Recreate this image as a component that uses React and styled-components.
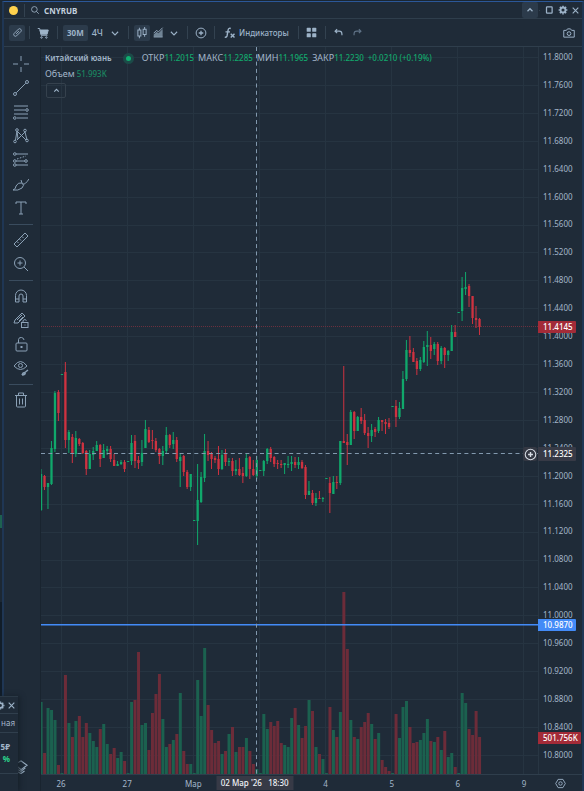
import React, { PureComponent } from 'react';
import styled, { createGlobalStyle } from 'styled-components';

const GlobalStyle = createGlobalStyle`
  * {
    box-sizing: border-box;
  }
  body {
    margin: 0;
    background: #1a2632;
    color: #a3b6c9;
    font: 8px/12px 'Noto Sans', sans-serif;
  }
  button, input {
    font: inherit;
    color: inherit;
  }
`;

const Page = styled.div`
  display: flex;
  min-height: 100vh;
  position: relative;
  overflow: hidden;
`;

const Behind = styled.div`
  display: flex;
  flex-direction: column;
  width: 2px;
  background: #1b2733;
`;

const BehindBlock = styled.div`
  flex: ${(props) => props.$size};
  background: ${(props) => props.$color};
`;

const Root = styled.main`
  flex: 1;
  min-width: 0;
  display: flex;
  flex-direction: column;
  margin-top: 1px;
  background: #1f2b38;
  border: 1px solid #2b5798;
  border-left: 2px solid #1f3654;
  border-right: 2px solid #1f3654;
  border-bottom: none;
`;

const TitleBar = styled.header`
  display: flex;
  align-items: center;
  height: 17px;
  padding: 0 1px 0 5px;
  border-bottom: 1px solid #2f3e4c;
`;

const Dot = styled.span`
  width: 9px;
  height: 9px;
  border-radius: 50%;
  background: #ffd24d;
`;

const Separator = styled.span`
  width: 1px;
  height: ${(props) => props.$height || 13}px;
  margin: 0 ${(props) => props.$right || 5}px 0 ${(props) => props.$left || 5}px;
  background: #334250;
`;

const Ticker = styled.input`
  width: 120px;
  height: 14px;
  margin-left: 4px;
  padding: 0;
  border: none;
  outline: none;
  background: none;
  color: #c3d0de;
  font-weight: 700;
`;

const Spacer = styled.span`
  flex: 1;
`;

const IconButton = styled.button`
  display: flex;
  align-items: center;
  justify-content: center;
  flex: none;
  width: ${(props) => props.$width || 16}px;
  height: ${(props) => props.$height || 16}px;
  padding: 0;
  border: none;
  border-radius: 2px;
  background: ${(props) => (props.$active ? '#2c3b4b' : 'none')};
  color: ${(props) => (props.$dim ? '#5f7286' : '#9db3c8')};
`;

const TextButton = styled(IconButton)`
  width: auto;
  padding: 0 4px;
  gap: 3px;
  font-size: ${(props) => props.$font || 8}px;
  font-weight: ${(props) => (props.$active ? 700 : 500)};
`;

const RailButton = styled(IconButton)`
  width: 24px;
  height: 24px;
  color: #8ba1b6;
`;

const Toolbar = styled.div`
  display: flex;
  align-items: center;
  height: 28px;
  padding: 0 5px;
  border-bottom: 1px solid #2f3e4c;
`;

const Body = styled.div`
  flex: 1;
  display: flex;
`;

const Rail = styled.nav`
  display: flex;
  flex-direction: column;
  align-items: center;
  width: 37px;
  padding: 5px 2px 16px 0;
  border-right: 1px solid #19242f;
`;

const RailLine = styled.hr`
  width: 24px;
  height: 1px;
  margin: 4px 0 3px;
  border: none;
  background: #3a4c5e;
`;

const Main = styled.section`
  flex: 1;
  min-width: 0;
  display: flex;
  flex-direction: column;
`;

const PlotRow = styled.div`
  flex: 1;
  display: flex;
`;

const Plot = styled.div`
  flex: 1;
  min-width: 0;
  position: relative;
`;

const Canvas = styled.svg`
  position: absolute;
  width: 100%;
  height: 100%;
`;

const Legend = styled.div`
  position: relative;
  padding: 3px 4px;
  font-size: 9px;
`;

const LegendRow = styled.div`
  display: flex;
  align-items: center;
  height: 16px;
  gap: ${(props) => props.$gap || 4}px;
  white-space: nowrap;
`;

const Name = styled.span`
  font-size: 8px;
  font-weight: 600;
  margin-right: 7px;
`;

const Status = styled.span`
  width: 11px;
  height: 11px;
  margin-right: 4px;
  border: 3px solid #1c4a48;
  border-radius: 50%;
  background: #10b070;
`;

const Value = styled.span`
  font-size: 8px;
  font-weight: 500;
  color: ${(props) => (props.$dim ? '#1b8560' : '#12a86c')};
`;

const Collapse = styled(IconButton)`
  margin-top: 1px;
  margin-left: 1px;
  border: 1px solid #35414d;
`;

const PriceAxis = styled.aside`
  position: relative;
  display: flex;
  flex-direction: column;
  justify-content: space-between;
  width: 44px;
  padding: 4px 0 13px 4px;
  border-left: 1px solid #283643;
`;

const PriceTag = styled.span`
  position: absolute;
  left: -1px;
  top: ${(props) => props.$top}%;
  transform: translateY(-50%);
  height: ${(props) => props.$height || 12}px;
  padding: 0 3px 0 5px;
  line-height: ${(props) => props.$height || 12}px;
  font-weight: 500;
  border-radius: 0 1px 1px 0;
  background: ${(props) => props.$color};
  color: #ffffff;
`;

const AddButton = styled(IconButton)`
  position: absolute;
  right: 1px;
  top: ${(props) => props.$top}%;
  transform: translateY(-50%);
  background: #343843;
  color: #d5dbe3;
`;

const TimeRow = styled.div`
  display: flex;
  height: 17px;
  border-top: 1px solid #2f3e4c;
`;

const TimeAxis = styled.div`
  flex: 1;
  position: relative;
`;

const Days = styled.div`
  display: grid;
  grid-template-columns: repeat(8, 1fr);
  margin: 0 -19px 0 -13px;
  line-height: 17px;
  text-align: center;
`;

const TimeTag = styled.span`
  position: absolute;
  top: 1px;
  left: 43%;
  width: 77px;
  transform: translateX(-50%);
  line-height: 14px;
  text-align: center;
  white-space: pre;
  font-weight: 500;
  background: #373a46;
  color: #f0f3f7;
`;

const TimeSettings = styled.div`
  display: flex;
  justify-content: center;
  width: 44px;
`;

const Popup = styled.aside`
  position: absolute;
  left: 0;
  bottom: 0;
  display: flex;
  flex-direction: column;
  width: 18px;
  height: 95px;
  border-top: 1px solid #2b3946;
  background: #1f2b38;
  box-shadow: 2px 0 5px #17212b;
`;

const PopupRow = styled.div`
  display: flex;
  flex-direction: column;
  align-items: flex-end;
  justify-content: center;
  height: ${(props) => props.$height}px;
  padding-right: ${(props) => props.$right || 2}px;
  border-bottom: 1px solid #303f4d;
  overflow: hidden;
`;

const PopupHeader = styled(PopupRow)`
  flex-direction: row;
  align-items: center;
  justify-content: flex-end;
`;

const Percent = styled.strong`
  color: #2bd48b;
`;

// [up, high, body top, body bottom, low, volume top]
const BARS = [
  [1, 469, 474, 510, 511, 702], [0, 475, 476, 487, 490, 753], [1, 483, 483, 487, 509, 708], [1, 441, 448, 484, 485, 710],
  [1, 391, 393, 449, 452, 720], [0, 390, 392, 413, 421, 765], [1, 374, 374, 375, 375, 773], [0, 362, 372, 440, 448, 675],
  [1, 430, 432, 440, 453, 723], [0, 434, 437, 454, 463, 737], [1, 431, 438, 454, 457, 721], [0, 438, 439, 444, 446, 716],
  [0, 442, 443, 453, 454, 737], [0, 450, 451, 469, 475, 723], [1, 450, 454, 469, 469, 733], [1, 447, 451, 455, 460, 741],
  [1, 441, 445, 451, 451, 747], [0, 444, 445, 459, 467, 729], [1, 444, 450, 458, 458, 724], [1, 446, 449, 451, 455, 744],
  [0, 446, 449, 459, 462, 754], [0, 454, 460, 466, 466, 748], [1, 461, 464, 466, 466, 758], [1, 460, 462, 464, 465, 752],
  [0, 460, 462, 469, 472, 761], [1, 461, 461, 462, 462, 773], [1, 435, 443, 461, 465, 702], [0, 435, 441, 461, 468, 700],
  [0, 456, 460, 463, 469, 652], [1, 440, 453, 462, 466, 725], [1, 420, 429, 448, 448, 723], [0, 427, 430, 442, 443, 750],
  [0, 430, 440, 441, 449, 713], [0, 438, 441, 450, 452, 694], [0, 448, 449, 456, 464, 674], [1, 446, 451, 456, 465, 719],
  [1, 427, 435, 451, 454, 747], [0, 434, 435, 445, 448, 744], [1, 432, 440, 444, 449, 740], [0, 437, 440, 459, 462, 734],
  [1, 453, 457, 461, 487, 693], [0, 455, 456, 472, 476, 751], [0, 470, 472, 487, 489, 764], [1, 474, 474, 487, 491, 764],
  [1, 520, 520, 521, 521, 773], [1, 464, 500, 521, 545, 680], [1, 472, 477, 502, 503, 716], [1, 434, 451, 478, 482, 648],
  [0, 441, 451, 455, 461, 705], [0, 452, 454, 459, 469, 730], [0, 456, 458, 460, 463, 743], [0, 446, 459, 469, 475, 741],
  [1, 450, 455, 469, 470, 754], [0, 449, 454, 462, 466, 751], [1, 458, 461, 462, 466, 734], [0, 458, 461, 471, 476, 727],
  [1, 460, 469, 471, 475, 752], [0, 458, 469, 475, 476, 747], [0, 467, 473, 476, 483, 747], [1, 453, 458, 476, 477, 738],
  [0, 456, 457, 469, 479, 751], [0, 460, 469, 475, 476, 764], [1, 456, 460, 476, 479, 769], [1, 470, 470, 471, 471, 773],
  [1, 460, 461, 471, 476, 714], [1, 448, 449, 461, 464, 729], [0, 447, 449, 458, 462, 722], [0, 456, 457, 464, 467, 726],
  [0, 460, 463, 464, 469, 721], [0, 460, 464, 465, 468, 743], [1, 463, 463, 465, 474, 745], [1, 456, 464, 465, 468, 747],
  [1, 456, 462, 464, 471, 718], [0, 457, 462, 465, 468, 708], [1, 457, 462, 465, 469, 725], [0, 460, 462, 468, 469, 738],
  [0, 465, 467, 495, 499, 726], [1, 481, 491, 495, 495, 700], [0, 490, 493, 503, 505, 711], [1, 493, 498, 503, 506, 747],
  [0, 491, 498, 499, 499, 754], [1, 497, 498, 499, 502, 759], [1, 478, 478, 479, 479, 773], [0, 477, 483, 493, 513, 707],
  [1, 476, 482, 494, 494, 730], [0, 476, 482, 483, 489, 737], [1, 441, 441, 483, 485, 712], [0, 366, 441, 443, 443, 592],
  [0, 434, 442, 445, 465, 649], [1, 410, 412, 445, 445, 720], [0, 411, 412, 431, 439, 737], [1, 416, 417, 431, 431, 739],
  [0, 408, 417, 421, 424, 727], [0, 414, 420, 433, 435, 722], [0, 427, 433, 436, 448, 713], [1, 424, 430, 436, 442, 724],
  [0, 427, 429, 432, 437, 739], [1, 417, 420, 431, 433, 733], [0, 420, 420, 422, 431, 760], [0, 419, 422, 424, 434, 767],
  [0, 418, 423, 427, 429, 771], [1, 406, 406, 407, 407, 773], [0, 400, 406, 417, 427, 714], [1, 402, 408, 417, 419, 738],
  [1, 371, 379, 409, 409, 707], [1, 340, 350, 379, 381, 701], [0, 336, 350, 353, 357, 727], [0, 348, 352, 362, 362, 743],
  [0, 358, 361, 369, 375, 742], [1, 357, 360, 369, 371, 740], [1, 341, 347, 362, 363, 733], [1, 331, 345, 347, 366, 719],
  [0, 337, 345, 351, 359, 741], [1, 342, 344, 349, 355, 742], [0, 342, 344, 361, 365, 737], [1, 346, 348, 361, 364, 750],
  [0, 347, 348, 355, 368, 731], [1, 350, 351, 355, 361, 757], [1, 325, 332, 351, 351, 753], [0, 325, 332, 337, 337, 767],
  [1, 312, 312, 313, 313, 773], [1, 277, 288, 311, 321, 693], [1, 272, 287, 289, 295, 703], [0, 284, 286, 296, 307, 729],
  [0, 296, 296, 318, 324, 735], [0, 306, 318, 320, 328, 711], [0, 318, 319, 327, 335, 737],
];

const PLOT = { left: 41, top: 47, width: 497, height: 727 };
const PRICES = Array.from({ length: 26 }, (_, i) => (11.8 - i * 0.04).toFixed(4));
const DAYS = ['26', '27', 'Мар', '', '4', '5', '6', '9'];

const topOf = (y) => ((y - PLOT.top) / PLOT.height) * 100;
const barX = (i) => 40.8 + i * 3.48;

const ICONS = {
  search: <><circle cx="7" cy="7" r="4.5" /><path d="M10.5 10.5 14 14" /></>,
  up: <path d="m4 10 4-4 4 4" strokeWidth="2" />,
  down: <path d="m3 6 5 5 5-5" strokeWidth="1.700" />,
  square: <rect x="4" y="3" width="9" height="10" rx="1" strokeWidth="2" />,
  gear: <><circle cx="8" cy="8" r="4" strokeWidth="3" /><path d="M8 1v2M8 13v2M1 8h2M13 8h2M3 3l2 2M11 11l2 2M3 13l2-2M11 5l2-2" strokeWidth="2.4" /></>,
  close: <path d="m3 3 10 10M13 3 3 13" strokeWidth="2" />,
  pencil: <path d="M3 9.500 9.500 3a2.500 2.500 0 0 1 3.500 3.500L6.500 13a2.500 2.500 0 0 1-3.500-3.500zM6 10l4-4" />,
  cart: <><path d="M1 2h2.500l2 9H14" /><path d="M4 4h11l-1.500 5.500H5.500z" fill="currentColor" /><circle cx="6" cy="14" r="1" /><circle cx="12.500" cy="14" r="1" /></>,
  candles: <><path d="M4.500 1v3M4.500 12v3M11.500 0v3M11.500 10v3" /><rect x="2.500" y="4" width="4" height="8" /><rect x="9.500" y="3" width="4" height="7" /></>,
  area: <><path d="M1 14V11l4-4 3 2 6-6v11z" fill="currentColor" stroke="none" opacity=".65" /><path d="m1 9 4-4 3 2 6-6M1 14.500h13" /></>,
  plusCircle: <><circle cx="8" cy="8" r="6.500" /><path d="M8 5v6M5 8h6" strokeWidth="1.700" /></>,
  fx: <><path d="M9 2q-3-1-3.500 2L4 12q-.5 2-3 1.500M2 6.500h6" strokeWidth="1.900" /><path d="m9 9 5 5M14 9l-5 5" strokeWidth="1.900" /></>,
  tiles: <g fill="currentColor" stroke="none"><rect x="1" y="1" width="6" height="6" rx="1" /><rect x="9" y="1" width="6" height="6" rx="1" /><rect x="1" y="9" width="6" height="6" rx="1" /><rect x="9" y="9" width="6" height="6" rx="1" /></g>,
  undo: <path d="M6 3 3 6l3 3M3 6h6q4 0 4 4v2" strokeWidth="1.700" />,
  redo: <path d="m10 3 3 3-3 3M13 6H7q-4 0-4 4v2" strokeWidth="1.700" />,
  camera: <><path d="M1 4.500h3.500L6 2.500h4l1.500 2H15v9H1z" /><circle cx="8" cy="8.800" r="2.500" /></>,
  cross: <path d="M8 0v5M8 11v5M0 8h5M11 8h5" />,
  line: <><path d="M3.200 12.800 12.800 3.200" /><circle cx="2" cy="14" r="1.500" /><circle cx="14" cy="2" r="1.500" /></>,
  fib: <><path d="M1 2h14M1 6h11M1 10h14M4 14h11" /><circle cx="14" cy="6" r="1.300" /><circle cx="1.800" cy="14" r="1.300" /></>,
  pattern: <><path d="M2.500 12 4 3l9 9M4 12l8-8 2 8M4 3l1 8" /><circle cx="4" cy="2" r="1.300" /><circle cx="12" cy="2.500" r="1.300" /><circle cx="2" cy="13.500" r="1.300" /><circle cx="14" cy="12.500" r="1.300" /></>,
  forecast: <><path d="M3 2h12M3 9h9M3 13h12" /><path d="m4 7 9-3" strokeDasharray="1.500 1.500" /><circle cx="1.800" cy="2" r="1.300" /><circle cx="1.800" cy="9" r="1.300" /><circle cx="1.800" cy="13" r="1.300" /><circle cx="13" cy="9" r="1.300" /></>,
  brush: <path d="M0 14q3-1 3-4 2-4 6-3 3 2 0 5-4 3-9 2M9 7l-1-3M10 8q2 1 6-5" />,
  text: <path d="M3 4V2h10v2M8 2v12M6 14h4" />,
  ruler: <path d="M1 12 12 1l3 3L4 15zM4 9.500 5.500 11M6.500 7 8 8.500M9 4.500 10.500 6" />,
  zoom: <><circle cx="7" cy="7" r="5.500" /><path d="m11 11 4 4M7 4.500v5M4.500 7h5" /></>,
  magnet: <path d="M2.500 14V7.500a5.500 5.500 0 0 1 11 0V14H10V8a2 2 0 0 0-4 0v6zM2.500 11H6M10 11h3.500" />,
  lockPencil: <><path d="m1 11 1-3 7-7 3 3-7 7zM4 8l5-5M6 9l4-4" /><rect x="8.500" y="10.500" width="6.500" height="5" /><path d="M10 10V8.500q2-2 3.500 0M12 12.500v1" /></>,
  lock: <><rect x="3" y="7" width="11" height="8" rx="1" /><path d="M5.500 7V3.500Q6 1 8.500 1.500 11 2 11 4" /><path d="M8.500 10v2" strokeWidth="2" /></>,
  eye: <><path d="M1 6q6.500-9 13 0Q7.500 13 1 6z" /><circle cx="7.500" cy="5.500" r="2" /><path d="M9 15q1-3 3-2.500 1 2-3 2.500M12.500 12l2.500-2" strokeWidth="1.500" /></>,
  trash: <path d="M2 3.500h12M5.500 3V1h5v2M3.500 4v10q0 1 1 1h7q1 0 1-1V4M6.500 6.500v6M9.500 6.500v6" />,
  layers: <path d="m1 5 7-4 7 5-7 5zM1 9l7 4 5-4M1 12l7 3.500 4-3M4 7.500 8 11" />,
  hexagon: <><path d="M4.500 2h7L15 8l-3.500 6h-7L1 8z" /><circle cx="8" cy="8" r="2.500" /></>,
};

function Icon({ name, size = 12, stroke = 1.3 }) {
  return (
    <svg width={size} height={size} viewBox="0 0 16 16" fill="none" stroke="currentColor" strokeWidth={stroke} aria-hidden="true">
      {ICONS[name]}
    </svg>
  );
}

const RAIL = [
  [['cross', 'Перекрестие'], ['line', 'Линия'], ['fib', 'Фибоначчи'], ['pattern', 'Паттерны'], ['forecast', 'Прогноз'], ['brush', 'Кисть'], ['text', 'Текст']],
  [['ruler', 'Линейка'], ['zoom', 'Увеличить']],
  [['magnet', 'Магнит'], ['lockPencil', 'Режим рисования'], ['lock', 'Закрепить'], ['eye', 'Скрыть']],
  [['trash', 'Удалить']],
];

class Chart extends PureComponent {
  render() {
    const bottom = PLOT.top + PLOT.height;
    const right = PLOT.left + PLOT.width;
    return (
      <Canvas viewBox={`${PLOT.left} ${PLOT.top} ${PLOT.width} ${PLOT.height}`} preserveAspectRatio="none">
        <g stroke="#263441">
          {PRICES.map((price, i) => {
            const y = Math.round(57 + i * 27.92) + 0.5;
            return <line key={price} x1={PLOT.left} x2={right} y1={y} y2={y} />;
          })}
          {DAYS.map((day, i) => (
            <line key={i} x1={61.5 + i * 66} x2={61.5 + i * 66} y1={PLOT.top} y2={bottom} />
          ))}
        </g>
        {BARS.map(([up, , , , , volume], i) => (
          <rect key={i} x={barX(i) - 1.2} y={volume} width="3" height={bottom - volume} fill={up ? '#1b614f' : '#6c2c39'} />
        ))}
        <line x1={PLOT.left} x2={right} y1="624.7" y2="624.7" stroke="#438bf7" strokeWidth="1.4" />
        <line x1={PLOT.left} x2={right} y1="326.5" y2="326.5" stroke="#6a303e" strokeDasharray="1 1" />
        {BARS.map(([up, high, top, low, end], i) => (
          <g key={i} fill={up ? '#10a86b' : '#cf3240'}>
            <rect x={barX(i) - 0.3} y={high} width="1" height={end - high} />
            <rect x={barX(i) - 0.9} y={top} width="2.3" height={low - top} />
          </g>
        ))}
        <g stroke="#8299ae" strokeDasharray="4 3.300">
          <line x1={PLOT.left} x2={right} y1="453.5" y2="453.5" />
          <line x1="256.5" x2="256.5" y1={PLOT.top} y2={bottom} />
        </g>
      </Canvas>
    );
  }
}

export default class App extends PureComponent {
  state = { ticker: 'CNYRUB' };

  changeTicker = (e) => {
    this.setState({ ticker: e.target.value });
  };

  render() {
    return (
      <Page>
        <GlobalStyle />
        <Behind>
          <BehindBlock $size={515} $color="#1c2834" />
          <BehindBlock $size={13} $color="#1d6150" />
          <BehindBlock $size={74} $color="#1c2834" />
          <BehindBlock $size={189} $color="#111d29" />
        </Behind>
        <Root>
          <TitleBar>
            <Dot />
            <Separator $left={6} />
            <Icon name="search" size={10} />
            <Ticker aria-label="Тикер" value={this.state.ticker} onChange={this.changeTicker} />
            <Spacer />
            <IconButton $active aria-label="Свернуть"><Icon name="up" size={10} /></IconButton>
            <Separator $left={1} $right={1} $height={1} />
            <IconButton aria-label="Развернуть"><Icon name="square" size={10} /></IconButton>
            <IconButton $width={12} aria-label="Настройки"><Icon name="gear" size={10} /></IconButton>
            <IconButton $width={12} aria-label="Закрыть"><Icon name="close" size={9} /></IconButton>
          </TitleBar>
          <Toolbar>
            <IconButton $active aria-label="Рисование"><Icon name="pencil" size={11} /></IconButton>
            <Separator $left={4} />
            <IconButton aria-label="Купить"><Icon name="cart" /></IconButton>
            <Separator $left={6} />
            <TextButton $active>30М</TextButton>
            <TextButton $font={9}>4Ч</TextButton>
            <IconButton aria-label="Интервалы"><Icon name="down" size={10} /></IconButton>
            <Separator />
            <IconButton $active aria-label="Свечи"><Icon name="candles" size={12} /></IconButton>
            <IconButton aria-label="Область"><Icon name="area" size={11} /></IconButton>
            <IconButton aria-label="Тип графика"><Icon name="down" size={10} /></IconButton>
            <Separator />
            <IconButton aria-label="Сравнить"><Icon name="plusCircle" /></IconButton>
            <Separator />
            <TextButton><Icon name="fx" />Индикаторы</TextButton>
            <Separator />
            <IconButton aria-label="Шаблоны"><Icon name="tiles" size={11} /></IconButton>
            <Separator />
            <IconButton aria-label="Отменить"><Icon name="undo" size={11} /></IconButton>
            <IconButton $dim $width={22} aria-label="Повторить"><Icon name="redo" size={11} /></IconButton>
            <Spacer />
            <IconButton aria-label="Снимок"><Icon name="camera" /></IconButton>
          </Toolbar>
          <Body>
            <Rail>
              {RAIL.map((group, i) => (
                <React.Fragment key={i}>
                  {i > 0 && <RailLine />}
                  {group.map(([name, label]) => (
                    <RailButton key={name} aria-label={label}><Icon name={name} size={16} stroke={1} /></RailButton>
                  ))}
                </React.Fragment>
              ))}
              <Spacer />
              <IconButton aria-label="Слои"><Icon name="layers" size={14} /></IconButton>
            </Rail>
            <Main>
              <PlotRow>
                <Plot>
                  <Chart />
                  <Legend>
                    <LegendRow>
                      <Name>Китайский юань</Name>
                      <Status />
                      <span>ОТКР<Value>11.2015</Value></span>
                      <span>МАКС<Value>11.2285</Value></span>
                      <span>МИН<Value>11.1965</Value></span>
                      <span>ЗАКР<Value>11.2230</Value></span>
                      <Value>+0.0210 (+0.19%)</Value>
                    </LegendRow>
                    <LegendRow $gap={2}>
                      <span>Объем</span>
                      <Value $dim>51.993K</Value>
                    </LegendRow>
                    <Collapse $width={20} $height={15} aria-label="Скрыть легенду"><Icon name="up" size={9} /></Collapse>
                  </Legend>
                  <AddButton $width={14} $height={14} $top={topOf(454)} aria-label="Добавить"><Icon name="plusCircle" size={13} /></AddButton>
                </Plot>
                <PriceAxis>
                  {PRICES.map((price) => <span key={price}>{price}</span>)}
                  <PriceTag $top={topOf(327)} $color="#a32b38">11.4145</PriceTag>
                  <PriceTag $top={topOf(454)} $height={14} $color="#373a46">11.2325</PriceTag>
                  <PriceTag $top={topOf(625)} $color="#438bf7">10.9870</PriceTag>
                  <PriceTag $top={topOf(738)} $color="#a32b38">501.756K</PriceTag>
                </PriceAxis>
              </PlotRow>
              <TimeRow>
                <TimeAxis>
                  <Days>{DAYS.map((day, i) => <span key={i}>{day}</span>)}</Days>
                  <TimeTag>{"02 Мар '26   18:30"}</TimeTag>
                </TimeAxis>
                <TimeSettings>
                  <IconButton aria-label="Настройки шкалы"><Icon name="hexagon" size={11} /></IconButton>
                </TimeSettings>
              </TimeRow>
            </Main>
          </Body>
        </Root>
        <Popup>
          <PopupHeader $height={17} $right={1}>
            <IconButton $width={10} $height={12} aria-label="Настройки панели"><Icon name="gear" size={9} /></IconButton>
            <IconButton $width={12} $height={12} aria-label="Закрыть панель"><Icon name="close" size={9} /></IconButton>
          </PopupHeader>
          <PopupRow $height={19} $right={3}>ная</PopupRow>
          <PopupRow $height={41} $right={8}>
            <strong>5₽</strong>
            <Percent>%</Percent>
          </PopupRow>
        </Popup>
      </Page>
    );
  }
}
